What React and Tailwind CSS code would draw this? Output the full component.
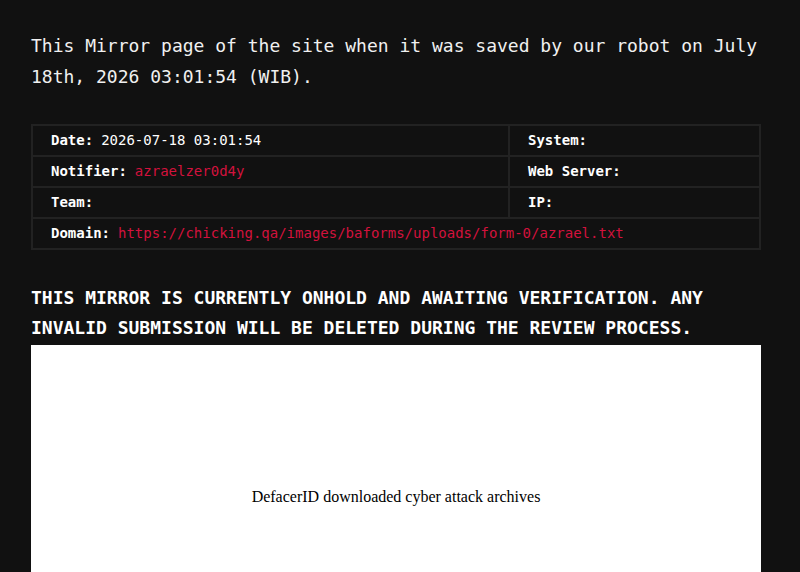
const mono = { fontFamily: '"DejaVu Sans Mono", "Liberation Mono", monospace' };

function Cell({ label, children, span }) {
  return (
    <div
      className={`flex h-[29px] items-center bg-[#111111] pl-[18px] text-[14px] ${span ? 'col-span-2' : ''}`}
    >
      <span className="font-bold text-white">{label}</span>
      {children ? <span className="ml-[8px]">{children}</span> : null}
    </div>
  );
}

export default function App() {
  return (
    <div className="min-h-[572px] bg-[#111111] text-[#f0f0f0]" style={mono}>
      <div className="w-[730px] pl-[31px] pt-[30px] box-content">
        <p className="text-[18px] leading-[31px]">
          This Mirror page of the site when it was saved by our robot on July 18th, 2026 03:01:54 (WIB).
        </p>

        <div className="mt-[32px] grid grid-cols-[475px_1fr] gap-[2px] bg-[#222222] p-[2px]">
          <Cell label="Date:">
            <span className="text-white">2026-07-18 03:01:54</span>
          </Cell>
          <Cell label="System:" />
          <Cell label="Notifier:">
            <span className="text-[#d3123d]">azraelzer0d4y</span>
          </Cell>
          <Cell label="Web Server:" />
          <Cell label="Team:" />
          <Cell label="IP:" />
          <Cell label="Domain:" span>
            <span className="text-[#d3123d]">https://chicking.qa/images/baforms/uploads/form-0/azrael.txt</span>
          </Cell>
        </div>

        <h2 className="mt-[33px] text-[18px] font-bold leading-[30px] text-white">
          THIS MIRROR IS CURRENTLY ONHOLD AND AWAITING VERIFICATION. ANY INVALID SUBMISSION WILL BE DELETED DURING THE REVIEW PROCESS.
        </h2>

        <div
          className="mt-[2px] flex h-[304px] items-center justify-center bg-white text-[16px] text-black"
          style={{ fontFamily: '"Liberation Serif", "Times New Roman", serif' }}
        >
          DefacerID downloaded cyber attack archives
        </div>
      </div>
    </div>
  );
}
